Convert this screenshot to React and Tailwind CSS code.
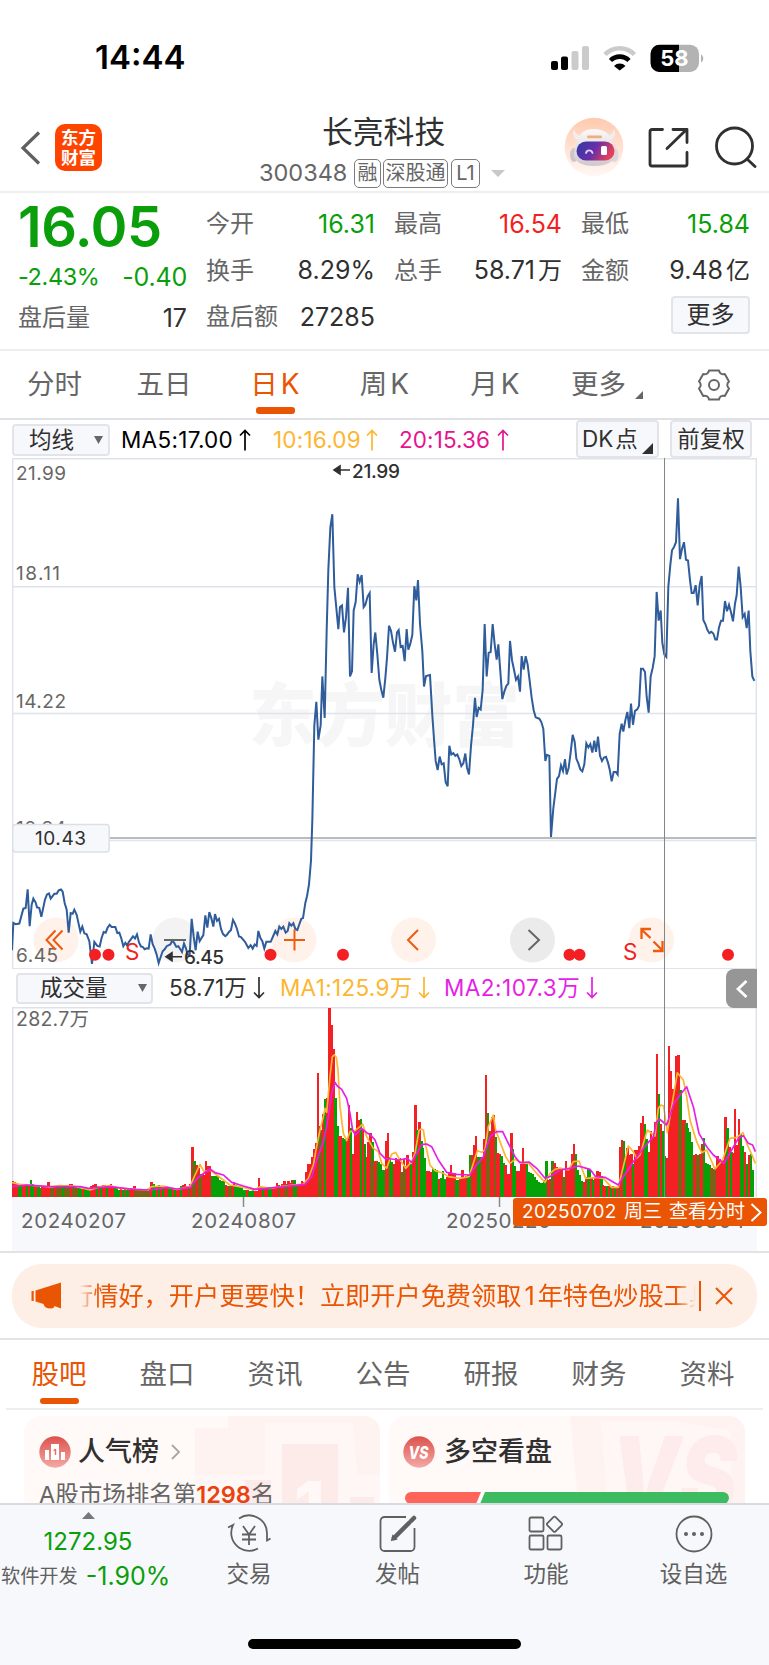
import React from 'react';
import clsx from 'clsx';

// Series are stored in thirds of a pixel, x,y pairs
const PRICE = `36,1465 40,1384 47,1388 58,1386 70,1342 77,1340 83,1285 89,1394 95,1330 100,1312 107,1324 111,1338 118,1340 124,1366 135,1315 141,1300 147,1297 152,1312 163,1298 170,1298 176,1288 183,1285 188,1292 194,1325 200,1345 206,1413 212,1355 218,1357 223,1345 230,1360 241,1410 247,1395 253,1415 260,1418 268,1438 276,1505 283,1440 292,1452 299,1454 305,1428 311,1411 317,1413 323,1398 329,1390 335,1396 346,1396 352,1414 358,1413 364,1430 370,1453 376,1443 381,1450 387,1440 393,1432 399,1424 405,1430 411,1418 417,1442 423,1454 428,1455 434,1462 440,1459 446,1460 452,1418 458,1447 464,1460 470,1478 476,1503 482,1485 488,1468 494,1462 500,1453 511,1448 517,1436 523,1444 529,1455 535,1453 541,1462 546,1470 552,1445 558,1460 563,1478 569,1478 575,1372 581,1425 587,1465 593,1410 599,1438 610,1420 616,1362 622,1398 628,1352 634,1370 640,1395 645,1358 651,1378 657,1372 663,1402 669,1417 676,1423 681,1419 687,1411 693,1405 699,1375 705,1386 711,1402 717,1424 723,1426 735,1440 745,1458 752,1450 758,1460 764,1448 770,1452 775,1408 781,1428 787,1438 793,1460 799,1440 812,1440 820,1422 826,1408 832,1418 838,1395 844,1402 850,1395 857,1413 863,1408 868,1385 874,1392 880,1385 886,1402 892,1405 898,1388 904,1372 909,1370 916,1325 921,1305 927,1270 933,1200 937,1080 943,800 949,730 955,842 962,800 967,655 974,778 980,520 985,340 991,215 997,175 1003,390 1015,515 1020,450 1026,445 1032,525 1038,480 1044,393 1050,655 1056,640 1061,460 1067,435 1073,353 1079,375 1085,355 1091,450 1096,443 1103,418 1109,408 1115,645 1121,560 1126,525 1132,590 1138,665 1144,695 1150,718 1156,660 1161,600 1167,505 1173,520 1179,555 1185,582 1191,525 1196,518 1202,568 1208,565 1214,610 1220,515 1225,576 1231,558 1237,532 1243,388 1249,430 1254,370 1260,500 1267,580 1272,685 1278,654 1290,651 1297,770 1302,840 1307,905 1313,932 1319,892 1325,915 1331,912 1337,968 1343,980 1348,860 1354,886 1360,882 1366,890 1372,886 1378,900 1384,920 1390,912 1396,883 1401,925 1407,945 1413,860 1419,800 1425,718 1430,775 1436,748 1442,753 1448,695 1454,500 1460,655 1466,585 1472,583 1478,500 1484,560 1490,605 1495,560 1501,640 1507,722 1513,700 1519,683 1525,676 1530,550 1536,607 1542,635 1548,665 1554,655 1560,700 1565,595 1571,635 1577,595 1583,620 1589,668 1595,718 1601,755 1607,776 1618,780 1624,790 1630,810 1636,905 1641,887 1648,890 1653,1130 1660,1045 1671,958 1677,950 1683,918 1689,935 1695,900 1700,945 1706,925 1712,880 1718,828 1724,848 1729,898 1735,912 1741,930 1747,936 1753,915 1759,853 1765,865 1771,855 1777,880 1783,845 1788,878 1794,833 1800,890 1806,905 1812,895 1818,893 1824,910 1829,930 1835,965 1841,938 1848,938 1853,945 1859,825 1865,795 1870,818 1876,785 1882,760 1888,808 1893,735 1899,798 1905,757 1912,752 1917,742 1923,632 1929,632 1935,642 1940,715 1946,762 1952,655 1958,630 1964,595 1970,405 1976,490 1982,460 1987,555 1993,590 1999,597 2005,390 2011,325 2016,282 2022,272 2028,258 2034,128 2040,308 2046,278 2052,258 2058,310 2064,312 2070,370 2075,408 2081,408 2087,385 2093,445 2099,385 2105,358 2110,488 2116,500 2122,517 2128,527 2134,523 2140,528 2146,546 2151,546 2157,510 2163,490 2169,490 2175,432 2181,462 2187,443 2193,465 2199,492 2205,440 2210,415 2216,330 2222,390 2228,480 2234,470 2240,512 2246,460 2251,580 2257,655 2263,668`;

const MA1 = `36,668 60,673 120,678 150,681 180,677 220,678 270,690 300,680 330,677 360,685 440,690 455,680 490,678 530,688 570,680 585,645 600,613 612,635 630,630 650,645 690,675 730,682 760,690 780,680 810,685 840,680 880,675 910,672 925,655 940,615 950,560 960,510 970,470 975,445 980,457 990,350 997,290 1003,285 1009,292 1014,330 1020,440 1030,520 1040,542 1050,515 1065,512 1080,500 1088,492 1100,530 1120,565 1135,575 1145,610 1160,625 1175,583 1187,577 1197,595 1217,625 1235,605 1245,580 1257,512 1263,507 1270,510 1278,560 1290,615 1305,632 1330,640 1345,650 1380,655 1407,650 1420,610 1432,572 1445,577 1455,570 1465,500 1480,465 1487,510 1500,545 1517,590 1530,610 1545,598 1565,608 1585,610 1610,640 1635,667 1650,640 1665,628 1680,624 1705,630 1720,605 1737,603 1757,655 1790,652 1810,655 1835,682 1855,682 1865,640 1885,558 1900,575 1910,595 1920,585 1942,510 1965,528 1975,445 1983,435 1991,438 2002,518 2015,440 2032,338 2050,360 2060,410 2070,480 2090,545 2105,578 2120,570 2145,627 2168,600 2190,535 2210,532 2229,518 2240,550 2258,590 2266,610`;

const MA2 = `36,680 80,675 140,679 240,680 265,685 330,680 400,688 450,690 500,682 530,687 572,682 580,668 600,648 630,627 645,638 670,645 695,667 730,678 765,688 800,685 850,680 915,673 935,650 950,600 970,545 980,500 995,400 1005,367 1012,378 1025,388 1040,415 1050,460 1058,510 1066,525 1085,505 1100,518 1112,525 1125,540 1140,580 1155,595 1175,597 1197,600 1222,595 1235,608 1250,580 1265,554 1280,552 1295,560 1315,600 1340,637 1370,643 1410,645 1425,620 1450,590 1470,530 1490,515 1508,515 1525,550 1545,590 1560,608 1587,606 1610,625 1635,655 1650,650 1680,630 1710,625 1735,618 1770,628 1787,650 1815,652 1855,675 1870,650 1900,605 1930,565 1960,530 1970,485 1978,477 2000,495 2022,430 2040,405 2060,380 2080,440 2097,520 2120,560 2140,585 2172,610 2195,570 2215,535 2230,527 2245,550 2258,555 2266,575`;

// Volume runs: start x and bar heights, negative = down day
const VOLUME = [
  { x: 39, v: [48, 46, 40, -38, -36, 36, 35, -36, 37, -52, -38, 37, 36, -34, -26, 30, 32, 31, 45, 34, -33, 34, 33, -36, 35, -36, -34, 34, -33, 40, 38, -34, 33, -28, -26, -24, 26, -25, -22, -20, 32, 36, 38, -32, 34, -32, 36, 36, -33, 30, 40, 34, -30, -26, -22, 24, -22, 23, -22, -24, 24, 26, 33, -24, 22, -21, 23, -20, 20, -19, 20] },
  { x: 454, v: [45, -40, -30, 32, -36, 34, -28, 26, 27, -26, -28, 27, -26, 25, 28, -34, 36, 38, 34, -30, 38, 150, -108, 96, 88, -70, 68, 66, 108, 92, 92, -64, -63, -62, -62, -50, -49, -47, 35, 34, -34, 35, 44, -35, -32, -32, -28, -22, -21, 20, -19, -18, -20, 19, 18, 58, 32, -28, 29, 30, -30, -24, 28, 30, 42, -36, 34, 40, 49, -38, 49, 42, 50, -50, -40, 40] },
  { x: 900, v: [40, 47, 45, 76, 99, 98, 120, 143, 162, 371, -213, 200, 250, -293, 298, 568, 515, 445, -297, -212, 182, 182, -177, -173, 170, 275, -207, 130, 200, 255, 230, -233, 200, -160, 120, 165, 192, -165, 108, 107, -104, -98, -82, -80, 168, 192, -120, -105, 100, 116, 112] },
  { x: 1199, v: [118, -75, 115, -92, 125, 100, -100, 135, 277, -202, 226, -168, -147, -118, 77, 78, 76, -87, -84, -80, 55, -56, -78, -55, 60, 75, 95, 70, 72, -50, -51, 55, 80, 60, 62, -65, -127, 125, 155, 184, -120, -119, 119, 175, 365, -252, 197, 240, 245, -180, 132, 130, -122, -101, 95, 70, 70, 192, -143, -92, 78, 78, 100, 148, 100, -99, -74, -73, -70, -60, -50, -45, -43, -43, -52, -108, 50, 55, -108, 103, 90, 85, 84, 80, -60, 108, 82, 85, 130, 158, -130, -80, -65, -48, 46, 60, -85, -84, 60, -52, 58, 78, 75, -62, 35, 34, -32, 32, -31, 32, -30, 30, -30] },
  { x: 1859, v: [150, 170, -168, -110, 148, 125, 130, -100, 142, 142, 152, 222, 242, -218, -175, 135, 197, 180, 225, 430, -308, 218, -198, -122, 118, 453, 378, 325, 320, 422, 427, -322, 232, 230, -222, -208, -195, -165, 125, 128, -127, 128, 160, -178, -102, -100, -95, 88, -84, 83, 122, 115, 108, 112, 240, -208, 150, -135, 132, 265, 155, 235, -190, -154, 136, -100, 125, -130, -80] },
];

function Triangle({ className }) {
  return (
    <svg viewBox="0 0 10 9" preserveAspectRatio="none" className={className} fill="currentColor">
      <path d="M0 0h10L5 9z" />
    </svg>
  );
}

function Corner({ className }) {
  return (
    <svg viewBox="0 0 10 10" className={className} fill="currentColor">
      <path d="M10 0v10H0z" />
    </svg>
  );
}

function StatusBar() {
  return (
    <div className="flex h-[100px] items-center pt-[15px] pl-[95px]">
      <span className="w-[455px] text-[33px] leading-none font-semibold text-black">14:44</span>
      <svg className="h-[28px] w-[155px]" viewBox="550 43 155 28">
        <rect x="551" y="60" width="7" height="9" rx="2" />
        <rect x="561" y="55.500" width="7" height="13.500" rx="2" />
        <rect x="571.500" y="50" width="7" height="19" rx="2" fill="#cbcbcb" />
        <rect x="582" y="45" width="7" height="24" rx="2" fill="#cbcbcb" />
        <g fill="none" strokeWidth="4.600">
          <path d="M605 53.500a20.500 20.500 0 0 1 29.500 0" stroke="#cbcbcb" />
          <path d="M610.500 59.500a13 13 0 0 1 18.500 0" stroke="#000" />
        </g>
        <path d="M614 65a8 8 0 0 1 11.500 0L619.700 69.500z" />
        <path d="M660 43.700h19V71h-19a9 9 0 0 1-9.500-9v-9.300a9 9 0 0 1 9.500-9z" />
        <path d="M679 43.700h11a9 9 0 0 1 9 9V62a9 9 0 0 1-9 9h-11z" fill="#b3b3b3" />
        <path d="M701 53.500c3 1.500 3 6.500 0 8z" fill="#b3b3b3" />
        <text x="674.500" y="65" textAnchor="middle" fontSize="22" fontWeight="700" fill="#fff">58</text>
      </svg>
    </div>
  );
}

function Robot() {
  return (
    <svg className="h-[60px] w-[60px]" viewBox="0 0 60 60">
      <defs>
        <linearGradient id="halo" x1="0" y1="0" x2="0" y2="1">
          <stop offset="0" stopColor="#ffc9ae" />
          <stop offset="1" stopColor="#fff8f5" />
        </linearGradient>
        <linearGradient id="visor" x1="0" y1="0" x2="1" y2=".3">
          <stop offset="0" stopColor="#2d3aa5" />
          <stop offset=".55" stopColor="#6a2ea8" />
          <stop offset="1" stopColor="#e2405c" />
        </linearGradient>
        <linearGradient id="shell" x1="0" y1="0" x2="0" y2="1">
          <stop offset="0" stopColor="#fbf9f9" />
          <stop offset="1" stopColor="#cfc9ce" />
        </linearGradient>
      </defs>
      <circle cx="30" cy="30" r="29.300" fill="url(#halo)" />
      <path d="M10 12c-3 6 0 10 5 12l4-4c-5-1-8-4-9-8zM50 12c3 6 0 10-5 12l-4-4c5-1 8-4 9-8z" fill="#f1ecee" />
      <ellipse cx="10" cy="38" rx="4" ry="7" fill="#cdc5cb" />
      <ellipse cx="50.500" cy="38" rx="4" ry="7" fill="#ddd6da" />
      <path d="M13 24c2-8 8-12 17-12s16 4 18 12l3 13c0 8-9 12-21 12s-20-4-20-12z" fill="url(#shell)" />
      <rect x="23" y="18.500" width="15" height="2.800" rx="1.400" fill="#eeb07a" />
      <rect x="12.500" y="24.500" width="38" height="19" rx="9.500" fill="url(#visor)" />
      <path d="M22 36c1-3.500 5.500-3.500 6.500 0" fill="none" stroke="#d8d4ff" strokeWidth="1.800" strokeLinecap="round" />
      <rect x="37" y="29" width="6" height="9" rx="1.500" fill="#fff" />
    </svg>
  );
}

function Header() {
  return (
    <div className="flex h-[93px] border-b-2 border-[#eeeeee] pl-[20px]">
      <svg className="mt-[31px] h-[34px] w-[22px]" viewBox="0 0 22 34" fill="none" stroke="#606060" strokeWidth="3.200">
        <path d="M19 1.500 3 17l16 15.500" />
      </svg>
      <div className="mt-[24px] ml-[13px] flex h-[47px] w-[47px] flex-col items-center justify-center rounded-[10px] bg-[#ff4400] text-[17.500px] leading-[19.500px] font-bold text-white">
        <span>东方</span>
        <span>财富</span>
      </div>
      <div className="ml-[157px] flex w-[250px] flex-col pt-[14px]">
        <h1 className="pl-[63px] text-[30.800px] leading-[36px] text-[#303030]">长亮科技</h1>
        <div className="mt-[7px] flex items-center text-[#666666]">
          <span className="w-[95px] text-[23.500px] leading-[32px]">300348</span>
          <Badge className="w-[27px]">融</Badge>
          <Badge className="ml-[2px] w-[65px]">深股通</Badge>
          <Badge className="ml-[3px] w-[29px]">L1</Badge>
          <Triangle className="ml-[11px] h-[7px] w-[14px] text-[#c8c8c8]" />
        </div>
      </div>
      <div className="mt-[17px] ml-[55px]">
        <Robot />
      </div>
      <svg className="mt-[26px] ml-[24px] h-[42px] w-[42px]" viewBox="0 0 42 42" fill="none" stroke="#303030" strokeWidth="2.800" strokeLinejoin="round" strokeLinecap="round">
        <path d="M14.500 3.500H4a2 2 0 0 0-2 2V38a2 2 0 0 0 2 2h33a2 2 0 0 0 2-2V26.500M25 3.500h14v13M19 22.500 38 4" />
      </svg>
      <svg className="mt-[26px] ml-[25px] h-[42px] w-[42px] shrink-0" viewBox="0 0 42 42" fill="none" stroke="#303030" strokeWidth="2.800" strokeLinecap="round">
        <circle cx="19.500" cy="20" r="18" />
        <path d="m32 33 8 7.500" />
      </svg>
    </div>
  );
}

function Badge({ className, children }) {
  return (
    <span className={clsx('flex h-[29px] items-center justify-center rounded-[5px] border-[1.500px] border-[#7c7c7c] text-[20px] leading-none whitespace-nowrap', className)}>
      {children}
    </span>
  );
}

function Stat({ label, value, unit, className }) {
  return (
    <div className="flex h-[46.500px] items-center justify-between text-[24px] whitespace-nowrap">
      <span className="text-[#666666]">{label}</span>
      <span className={clsx('flex items-baseline text-[25px]', className || 'text-[#303030]')}>
        {value}
        {unit && <span className="ml-[3px] text-[24px]">{unit}</span>}
      </span>
    </div>
  );
}

function Quote() {
  return (
    <div className="flex h-[158px] border-b-2 border-[#eeeeee] pt-[8px] pl-[18px]">
      <div className="w-[169px]">
        <div className="h-[57px] text-[56px] leading-[52px] font-semibold tracking-[-0.500px] text-[#0a9f0a]">16.05</div>
        <div className="flex h-[37px] items-center justify-between text-[23.500px] text-[#0a9f0a]">
          <span className="tracking-[-0.400px]">-2.43%</span>
          <span className="pt-[2px] text-[25px] tracking-[-0.200px]">-0.40</span>
        </div>
        <Stat label="盘后量" value="17" />
      </div>
      <div className="ml-[19px] grid w-[544px] grid-cols-[169px_168px_169px] content-start gap-x-[19px]">
        <Stat label="今开" value="16.31" className="text-[#0a9f0a]" />
        <Stat label="最高" value="16.54" className="text-[#f41f22]" />
        <Stat label="最低" value="15.84" className="text-[#0a9f0a]" />
        <Stat label="换手" value="8.29%" />
        <Stat label="总手" value="58.71" unit="万" />
        <Stat label="金额" value="9.48" unit="亿" />
        <Stat label="盘后额" value="27285" />
        <span />
        <button className="mt-[2px] ml-auto flex h-[38px] w-[79px] items-center justify-center rounded-[4px] border-2 border-[#e2e4ea] bg-[#f7f8fb] text-[24px] text-[#303030]">
          更多
        </button>
      </div>
    </div>
  );
}

function PeriodTabs() {
  const tabs = [
    { name: '分时', width: 'w-[109px]' },
    { name: '五日', width: 'w-[110px]' },
    { name: '日', suffix: 'K', width: 'w-[112px]', active: true },
    { name: '周', suffix: 'K', width: 'w-[107px]' },
    { name: '月', suffix: 'K', width: 'w-[114px]' },
  ];
  return (
    <div className="flex h-[69px] border-b-2 border-[#dfe1e6] text-[27.500px] leading-[67px] text-[#666666]">
      {tabs.map((tab) => (
        <div key={tab.name} className={clsx('flex flex-col items-center', tab.width, tab.active && 'text-[#ea5504]')}>
          <span className="flex h-[56px]">
            {tab.name}
            {tab.suffix && <span className="ml-[3px] text-[28px]">{tab.suffix}</span>}
          </span>
          {tab.active && <span className="h-[7px] w-[39px] rounded-[3px] bg-[#ea5504]" />}
        </div>
      ))}
      <span className="ml-[19px]">更多</span>
      <Corner className="mt-[40px] ml-[9px] h-[8px] w-[8px]" />
      <svg className="mt-[18px] ml-[54px] h-[32px] w-[34px]" viewBox="0 0 34 32" fill="none" stroke="#666666" strokeWidth="2" strokeLinejoin="round">
        <path d="M12 1.500h10c.5 3 3 4.500 5.800 3.500L32 12.500c-2.300 2-2.300 5 0 7L27.800 27c-2.800-1-5.300.5-5.800 3.500H12c-.5-3-3-4.500-5.800-3.500L2 19.500c2.300-2 2.300-5 0-7L6.200 5c2.800 1 5.300-.5 5.800-3.500z" />
        <circle cx="17" cy="16" r="5" />
      </svg>
    </div>
  );
}

function Arrow({ down, className }) {
  return (
    <svg viewBox="0 0 12 24" className={clsx('h-[24px] w-[12px] shrink-0', className)} fill="none" stroke="currentColor" strokeWidth="1.700">
      {down ? <path d="M6 1v20.500M1 16.500l5 5 5-5" /> : <path d="M6 22.500V2.500M1 7.500l5-5 5 5" />}
    </svg>
  );
}

function AverageRow() {
  return (
    <div className="flex h-[38px] items-center pl-[12px] text-[22.500px] whitespace-nowrap">
      <button className="mt-px flex h-[32px] w-[98px] items-center justify-between rounded-[4px] border-2 border-[#e2e4ea] bg-[#f7f8fb] pr-[5px] pl-[15px] text-[#303030]">
        均线
        <Triangle className="h-[8px] w-[9px] text-[#666666]" />
      </button>
      <span className="mt-px ml-[11px] flex w-[152px] items-center text-black">
        <span className="w-[118px] tracking-[0.300px]">MA5:17.00</span>
        <Arrow />
      </span>
      <span className="mt-px flex w-[126px] items-center text-[#fdb62f]">
        <span className="w-[93px] tracking-[0.200px]">10:16.09</span>
        <Arrow />
      </span>
      <span className="mt-px flex w-[111px] items-center text-[#e5148f]">
        <span className="w-[98px] tracking-[0.100px]">20:15.36</span>
        <Arrow />
      </span>
      <button className="relative ml-[66px] flex h-[38px] w-[83px] items-center rounded-[4px] border-2 border-[#e2e4ea] bg-[#f7f8fb] pl-[4px] text-[#303030]">
        DK<span className="ml-[2px]">点</span>
        <Corner className="absolute right-[4px] bottom-[2px] h-[11px] w-[11px]" />
      </button>
      <button className="ml-[11px] flex h-[38px] w-[82px] items-center justify-center rounded-[4px] border-2 border-[#e2e4ea] bg-[#f7f8fb] text-[#303030]">
        前复权
      </button>
    </div>
  );
}

function PriceChart() {
  const dots = [83, 96.5, 258.5, 331, 557.5, 567.5, 716];
  return (
    <svg className="block h-[511px] w-[745px]" viewBox="0 0 745 511">
      <text x="237" y="283" fontSize="69" fontWeight="900" fill="#f6f6f6" textLength="271" lengthAdjust="spacingAndGlyphs">东方财富</text>
      <g stroke="#dfe4ec" strokeWidth="1.500" fill="none">
        <path d="M0 128.800h744M0 255.500h744M0 382.500h744" />
        <path d="M.7.700h743.600v510H.7z" />
      </g>
      <g fontSize="19" fill="#666666">
        <text x="4" y="21.500" textLength="50">21.99</text>
        <text x="4" y="122" textLength="44">18.11</text>
        <text x="4" y="249.500" textLength="50">14.22</text>
        <text x="4" y="377" textLength="50">10.34</text>
      </g>
      <path d="M0 380h744" stroke="#b9bcba" strokeWidth="1.800" />
      <g>
        <circle cx="44" cy="482" r="22.500" fill="#fff2eb" />
        <circle cx="163" cy="482" r="22.500" fill="#f3f3f3" />
        <circle cx="282" cy="482" r="22.500" fill="#fff2eb" />
        <circle cx="401.500" cy="482" r="22.500" fill="#fff2eb" />
        <circle cx="520.500" cy="482" r="22.500" fill="#ebebeb" />
        <circle cx="639.500" cy="482" r="22.500" fill="#fff2eb" />
      </g>
      <text x="4" y="504" fontSize="19" fill="#666666" textLength="42">6.45</text>
      <polyline
        points={PRICE}
        transform="translate(-12 -3) scale(.33333 .33806)"
        fill="none"
        stroke="#2f5c9a"
        strokeWidth="6"
        strokeLinejoin="miter"
      />
      <g fill="none" strokeWidth="2" stroke="#ef5a0c">
        <path d="M43.500 472.500 34.500 482l9 9.500M50.500 472.500 41.500 482l9 9.500M272 482h21M282.500 471.500v21M406 472 396 482l10 10" />
        <path d="m638.500 480-9-8.500M629.500 481v-10h9.500M641.500 483.500l9 9M650.500 483v10H641" strokeWidth="2.300" />
      </g>
      <path d="M516.500 472 527 482l-10.500 10M152 482h22" fill="none" stroke="#666666" strokeWidth="2" />
      <g fill="#f41f22">
        {dots.map((x) => (
          <circle key={x} cx={x} cy="496.700" r="6" />
        ))}
        <text x="113" y="502" fontSize="22.500">S</text>
        <text x="611" y="502" fontSize="22.500">S</text>
      </g>
      <g fill="#303030" fontSize="19" fontWeight="500">
        <path d="M324 12h14M328 8l-6 4 6 4zM156 498.700h14M160 494.700l-6 4 6 4z" stroke="#303030" strokeWidth="1.600" />
        <text x="340" y="19.500" textLength="48">21.99</text>
        <text x="172" y="505.500" textLength="40">6.45</text>
      </g>
      <rect x=".7" y="366.500" width="96.500" height="27.500" rx="3" fill="#f7f8fb" stroke="#dcdfe6" strokeWidth="1.500" />
      <text x="23" y="387.200" fontSize="19" fill="#303030" textLength="51">10.43</text>
    </svg>
  );
}

function VolumeRow() {
  return (
    <div className="relative flex h-[38px] items-center pl-[4px] text-[22.500px] whitespace-nowrap">
      <button className="flex h-[31px] w-[137px] items-center justify-between rounded-[4px] border-2 border-[#e2e4ea] bg-[#f7f8fb] pr-[4px] pl-[22px] text-[#303030]">
        成交量
        <Triangle className="h-[8px] w-[9px] text-[#666666]" />
      </button>
      <span className="ml-[16px] flex w-[111px] items-center text-[#303030]">
        <span className="w-[84px]">58.71万</span>
        <Arrow down />
      </span>
      <span className="flex w-[164px] items-center text-[#fdb62f]">
        <span className="w-[138px] tracking-[0.300px]">MA1:125.9万</span>
        <Arrow down />
      </span>
      <span className="flex items-center text-[#e61ee6]">
        <span className="w-[142px] tracking-[0.500px]">MA2:107.3万</span>
        <Arrow down />
      </span>
      <div className="absolute top-0 right-0 flex h-[39px] w-[31px] items-center justify-center rounded-l-[8px] bg-[#969696]">
        <svg className="h-[18px] w-[12px]" viewBox="0 0 12 18" fill="none" stroke="#fff" strokeWidth="2.800">
          <path d="M10.500 1 2 9l8.500 8" />
        </svg>
      </div>
    </div>
  );
}

function VolumeChart() {
  const bars = VOLUME.flatMap((run) => run.v.map((h, i) => ({ x: run.x - 3 + i * 5.87, h })));
  return (
    <svg className="block h-[190px] w-[745px]" viewBox="0 0 745 190">
      <path d="M.7 190V.700h743.600V190" fill="none" stroke="#dfe1e8" strokeWidth="1.500" />
      <text x="4" y="19" fontSize="19.500" fill="#666666" textLength="73">282.7万</text>
      <g transform="translate(-12 -47) scale(.33333)">
        <g shapeRendering="crispEdges">
          {bars.map((b) => (
            <rect
              key={b.x}
              x={b.x}
              y={711 - Math.abs(b.h)}
              width="7"
              height={Math.abs(b.h)}
              fill={b.h > 0 ? '#f32123' : '#07a007'}
            />
          ))}
        </g>
        <g fill="none" strokeWidth="5" strokeLinejoin="round">
          <polyline points={MA1} stroke="#fdb62f" />
          <polyline points={MA2} stroke="#e61ee6" />
        </g>
      </g>
    </svg>
  );
}

function DateAxis() {
  return (
    <div className="relative h-[54px] w-[745px] bg-[#f7f8fb]">
      <svg className="block h-[54px] w-[745px]" viewBox="0 0 745 54">
        <path d="M231.500 0v10M487.500 0v10" stroke="#8a8a8a" strokeWidth="1.500" />
        <g fontSize="20.500" fill="#666666">
          <text x="9" y="31" textLength="105">20240207</text>
          <text x="179" y="31" textLength="105">20240807</text>
          <text x="434" y="31" textLength="105">20250220</text>
          <text x="628" y="31" textLength="105">20250804</text>
        </g>
      </svg>
      <div className="absolute top-px left-[501px] flex h-[28px] w-[254px] items-center rounded-[3px] bg-[#ea5504] pl-[9px] text-[19px] whitespace-nowrap text-white">
        <span className="w-[95px] tracking-[0.300px]">20250702</span>
        <span className="ml-[7px] w-[38px]">周三</span>
        <span className="ml-[7px] w-[77px]">查看分时</span>
        <svg className="ml-[4px] h-[19px] w-[12px]" viewBox="0 0 12 19" fill="none" stroke="#fff" strokeWidth="2">
          <path d="m1.500 1 9 8.500-9 8.500" />
        </svg>
      </div>
    </div>
  );
}

function Charts() {
  return (
    <div className="border-b-2 border-[#e2e3e6] pl-[12px]">
      <div className="relative w-[745px]">
        <PriceChart />
        <VolumeRow />
        <VolumeChart />
        <div className="absolute top-0 left-[652px] h-[739px] w-px bg-[#858585]" />
      </div>
      <DateAxis />
    </div>
  );
}

function Notice() {
  return (
    <div className="flex h-[87px] items-start border-b-2 border-[#e2e3e6] px-[12px] pt-[11px]">
      <div className="flex h-[64px] w-[745px] items-center rounded-[30px] bg-[#fdeee6] pl-[19px] text-[#ea5504]">
        <svg className="h-[28px] w-[32px]" viewBox="0 0 32 28" fill="currentColor">
          <path d="M.5 9h2.200v10H.5zM4.500 8.500 30 .500v26l-6.500-2.500c-1 2.500-2.500 2.800-4.500 2.300-3 .5-5.500-1-6.500-4.300l-8-2.500z" />
        </svg>
        <div className="ml-[17px] w-[619px] overflow-hidden text-[25.200px] whitespace-nowrap [mask-image:linear-gradient(to_right,transparent,black_18px,black_595px,transparent_616px)]">
          <div className="-ml-[12px] pt-px">
            行情好，开户更要快！立即开户免费领取<span className="mx-[3px]">1</span>年特色炒股工具
          </div>
        </div>
        <span className="h-[30px] w-[2px] bg-[#ea5504]" />
        <svg className="ml-[14px] h-[18px] w-[18px]" viewBox="0 0 18 18" fill="none" stroke="currentColor" strokeWidth="2">
          <path d="m1 1 16 16M17 1 1 17" />
        </svg>
      </div>
    </div>
  );
}

function SectionTabs() {
  const tabs = ['股吧', '盘口', '资讯', '公告', '研报', '财务', '资料'];
  return (
    <div className="mx-[6px] h-[70px] border-b-2 border-[#eeeeee] text-[27.500px] leading-[68px] text-[#666666]">
      <div className="-ml-px flex">
        {tabs.map((tab, i) => (
          <div key={tab} className={clsx('flex w-[108px] shrink-0 flex-col items-center', i === 0 && 'text-[#ea5504]')}>
            <span className="h-[58px]">{tab}</span>
            {i === 0 && <span className="h-[6px] w-[39px] rounded-[3px] bg-[#ea5504]" />}
          </div>
        ))}
      </div>
    </div>
  );
}

function Cards() {
  return (
    <div className="flex h-[93px] gap-[9px] overflow-hidden pt-[6px] pl-[24px]">
      <div className="relative h-[130px] w-[356px] overflow-hidden rounded-[16px] bg-[#fff9f8] pl-[15px]">
        <svg className="absolute top-0 left-0 h-[130px] w-[356px]" viewBox="0 0 356 130">
          <path d="M171 12h33V0h152v130H171z" fill="#fff3f1" />
          <path d="M171 59h70V7h88l4 52h23v71H171z" fill="#fff7f6" />
          <path d="M258 28h56v102h-56zM221 64h26v66h-26zM326 81h24v49h-24z" fill="#fdebea" />
          <text x="270" y="116" fontSize="70" fontWeight="800" fill="#fff8f7">1</text>
        </svg>
        <div className="relative flex h-[71px] items-center">
          <svg className="h-[32px] w-[32px]" viewBox="0 0 32 32">
            <defs>
              <linearGradient id="medal" x1="0" y1="0" x2="0" y2="1">
                <stop offset="0" stopColor="#dc524d" />
                <stop offset="1" stopColor="#f4a9a5" />
              </linearGradient>
            </defs>
            <circle cx="16" cy="16" r="15.700" fill="url(#medal)" />
            <path d="M6 14h4v10H6zM12 8h8v16h-8zM22 16h4v8h-4z" fill="#fff" />
            <text x="14.200" y="18.500" fontSize="7.500" fontWeight="800" fill="#dc6a64">1</text>
          </svg>
          <span className="ml-[7px] pt-px text-[27px] font-medium text-[#303030]">人气榜</span>
          <svg className="ml-[12px] h-[16px] w-[10px]" viewBox="0 0 10 16" fill="none" stroke="#a8a5a5" strokeWidth="1.800">
            <path d="m1 1 7 7-7 7" />
          </svg>
        </div>
        <div className="relative -mt-[9px] text-[23.500px] leading-[34px] whitespace-nowrap text-[#666666]">
          A股市场排名第<span className="font-semibold text-[#e8420f]">1298</span>名
        </div>
      </div>
      <div className="relative h-[130px] w-[356px] overflow-hidden rounded-[16px] bg-[#fff9f8] pl-[14px]">
        <svg className="absolute top-0 left-0 h-[130px] w-[356px]" viewBox="0 0 356 130">
          <path d="M181 0h175v130H193z" fill="#fff3f1" />
          <path d="M212 5h70l60 10v60l-20 55H222z" fill="#fff7f6" />
          <text x="222" y="100" fontSize="110" fontWeight="900" fontStyle="italic" fill="#fdeceb" textLength="126" lengthAdjust="spacingAndGlyphs">VS</text>
        </svg>
        <div className="relative flex h-[71px] items-center">
          <svg className="h-[32px] w-[32px]" viewBox="0 0 32 32">
            <circle cx="16" cy="16" r="15.700" fill="url(#medal)" />
            <text x="15.500" y="22.500" textAnchor="middle" fontSize="18" fontWeight="800" fontStyle="italic" fill="#fff" textLength="20" lengthAdjust="spacingAndGlyphs">VS</text>
          </svg>
          <span className="ml-[9px] pt-px text-[27px] font-medium text-[#303030]">多空看盘</span>
        </div>
        <svg className="relative mt-[5px] ml-[2px] h-[12px] w-[324px]" viewBox="0 0 324 12">
          <rect width="324" height="12" rx="6" fill="#fff" />
          <path d="M6 0h70l-5 12H6A6 6 0 0 1 6 0z" fill="#fe6459" />
          <path d="M80 0h238a6 6 0 0 1 0 12H75z" fill="#3dbb60" />
        </svg>
      </div>
    </div>
  );
}

function NavItem({ label, className, children }) {
  return (
    <div className={clsx('flex flex-col items-center', className)}>
      <svg className="mt-[8px] h-[42px] w-[44px]" viewBox="0 0 44 42" fill="none" stroke="#606060" strokeWidth="1.800">
        {children}
      </svg>
      <span className="mt-[3px] text-[22.500px] leading-[32px] text-[#606060]">{label}</span>
    </div>
  );
}

function BottomNav() {
  return (
    <div className="flex h-[162px] flex-col items-center border-t-2 border-[#d9dbe2] bg-[#f7f8fb]">
      <div className="flex h-[134px] w-full whitespace-nowrap">
        <div className="flex w-[176px] flex-col items-center">
          <Triangle className="mt-[7px] h-[7px] w-[13px] rotate-180 text-[#77777c]" />
          <span className="mt-[6px] text-[24px] leading-[34px] text-[#0a9f0a]">1272.95</span>
          <div className="flex w-full items-center pl-[1px] leading-[34px]">
            <span className="text-[19.200px] text-[#606060]">软件开发</span>
            <span className="ml-[8px] text-[25px] text-[#0a9f0a]">-1.90%</span>
          </div>
        </div>
        <NavItem label="交易" className="w-[146px]">
          <path d="M12 5.500A18 18 0 0 1 40 21v6.500l3.500-2M31 35.500A18 18 0 0 1 6 12L1 14.500" />
          <path d="m16 13 6 8.500 6-8.500M22 21.500V32M15 21.500h14M15 26.500h14" />
        </NavItem>
        <NavItem label="发帖" className="w-[151px]">
          <path d="M30 4H8.500a4 4 0 0 0-4 4v26a4 4 0 0 0 4 4h26a4 4 0 0 0 4-4V15" />
          <path d="m18 25 15-15M35 8l3-3" strokeWidth="4.500" strokeLinecap="round" />
          <path d="m16 27 4-1-3-3z" fill="#606060" />
        </NavItem>
        <NavItem label="功能" className="w-[146px]">
          <rect x="5.500" y="4.500" width="14" height="14" rx="1.500" />
          <rect x="5.500" y="22.500" width="14" height="14" rx="1.500" />
          <rect x="23.500" y="22.500" width="14" height="14" rx="1.500" />
          <rect x="24.700" y="5.500" width="11.500" height="11.500" rx="1.500" transform="rotate(45 30.500 11.300)" />
        </NavItem>
        <NavItem label="设自选" className="w-[149px]">
          <circle cx="22" cy="21" r="17.500" />
          <g fill="#606060" stroke="none">
            <circle cx="14" cy="21" r="2" />
            <circle cx="22" cy="21" r="2" />
            <circle cx="30" cy="21" r="2" />
          </g>
        </NavItem>
      </div>
      <div className="h-[10px] w-[273px] rounded-full bg-black" />
    </div>
  );
}

export default function App() {
  return (
    <div className="h-[1665px] w-[769px] overflow-hidden bg-white font-['Inter','Noto_Sans_CJK_SC',sans-serif]">
      <StatusBar />
      <Header />
      <Quote />
      <PeriodTabs />
      <AverageRow />
      <Charts />
      <Notice />
      <SectionTabs />
      <Cards />
      <BottomNav />
    </div>
  );
}
